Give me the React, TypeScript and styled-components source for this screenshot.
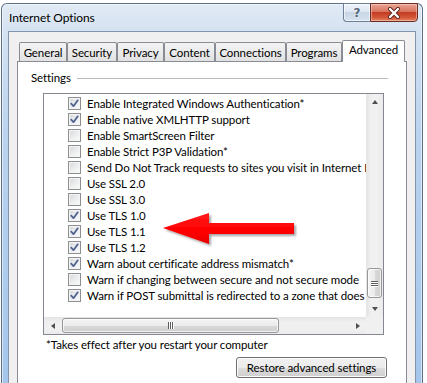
import styled, { createGlobalStyle } from "styled-components";

const GlobalStyle = createGlobalStyle`
  html, body {
    margin: 0;
    padding: 0;
    background: #ffffff;
    overflow: hidden;
  }
  body {
    font-family: Lato, "Open Sans", sans-serif;
    font-size: 11.5px;
    letter-spacing: -0.1px;
    color: #000000;
  }
`;

interface Setting {
  label: string;
  checked: boolean;
}

const settings: Setting[] = [
  { label: "Enable Integrated Windows Authentication*", checked: true },
  { label: "Enable native XMLHTTP support", checked: true },
  { label: "Enable SmartScreen Filter", checked: false },
  { label: "Enable Strict P3P Validation*", checked: false },
  { label: "Send Do Not Track requests to sites you visit in Internet Explorer*", checked: false },
  { label: "Use SSL 2.0", checked: false },
  { label: "Use SSL 3.0", checked: false },
  { label: "Use TLS 1.0", checked: true },
  { label: "Use TLS 1.1", checked: true },
  { label: "Use TLS 1.2", checked: true },
  { label: "Warn about certificate address mismatch*", checked: true },
  { label: "Warn if changing between secure and not secure mode", checked: false },
  { label: "Warn if POST submittal is redirected to a zone that does not permit posts", checked: true },
];

const tabs = [
  { label: "General", width: 48 },
  { label: "Security", width: 50 },
  { label: "Privacy", width: 47 },
  { label: "Content", width: 51 },
  { label: "Connections", width: 71 },
  { label: "Programs", width: 56 },
  { label: "Advanced", width: 63, active: true },
];

const Page = styled.div`
  position: relative;
  width: 427px;
  height: 383px;
  overflow: hidden;
`;

const Window = styled.div`
  margin: 3px 0 0 1px;
  width: 422px;
  height: 400px;
  box-sizing: border-box;
  border: 1px solid #5b6f88;
  border-bottom: none;
  border-radius: 6px 6px 0 0;
  background: linear-gradient(180deg, #e1eaf5 0, #d4e2f1 28px, #bad3ee 130px, #a3c5eb 100%);
  box-shadow: inset 0 0 0 1px rgba(255, 255, 255, 0.55);
  display: flex;
  flex-direction: column;
`;

const TitleBar = styled.div`
  height: 27px;
  flex-shrink: 0;
  display: flex;
  align-items: flex-start;
`;

const Title = styled.div`
  padding: 6px 0 0 7px;
  line-height: 16px;
  font-size: 12px;
  color: #000;
`;

const CaptionButtons = styled.div`
  margin: -1px 4px 0 auto;
  display: flex;
`;

const HelpButton = styled.div`
  width: 27px;
  height: 19px;
  box-sizing: border-box;
  border: 1px solid #6e7f95;
  border-right: none;
  border-radius: 0 0 0 4px;
  background: linear-gradient(180deg, #eef3f9 0, #dde7f2 45%, #c7d5e5 50%, #d6e2ef 100%);
  box-shadow: inset 0 0 0 1px rgba(255, 255, 255, 0.6);
  display: flex;
  align-items: center;
  justify-content: center;
  font-family: "DejaVu Sans", sans-serif;
  font-weight: bold;
  font-size: 12px;
  color: #56677c;
  text-shadow: 0 0 2px #ffffff;
`;

const CloseButton = styled.div`
  width: 48px;
  height: 19px;
  box-sizing: border-box;
  border: 1px solid #6a2e26;
  border-radius: 0 0 4px 0;
  background: linear-gradient(180deg, #e8a595 0, #d8745f 45%, #c43c22 50%, #d4583c 80%, #e58a62 100%);
  box-shadow: inset 0 0 0 1px rgba(255, 220, 210, 0.45);
  display: flex;
  align-items: center;
  justify-content: center;
`;

const Client = styled.div`
  flex: 1;
  margin: 0 6px;
  border: 1px solid #8295ad;
  border-bottom: none;
  background: #f0f0f0;
  padding: 8px 8px 0;
  display: flex;
  flex-direction: column;
`;

const TabRow = styled.div`
  height: 21px;
  padding-left: 2px;
  display: flex;
  align-items: flex-end;
  position: relative;
  z-index: 1;
`;

const Tab = styled.div<{ $w: number; $active?: boolean }>`
  width: ${({ $w }) => $w}px;
  height: ${({ $active }) => ($active ? 22 : 19)}px;
  margin-bottom: ${({ $active }) => ($active ? -1 : 0)}px;
  box-sizing: border-box;
  border: 1px solid #898c95;
  border-bottom: none;
  border-radius: 2px 2px 0 0;
  background: ${({ $active }) =>
    $active ? "#ffffff" : "linear-gradient(180deg, #f3f3f3 0, #ebebeb 50%, #e1e1e1 100%)"};
  display: flex;
  justify-content: center;
  padding-top: ${({ $active }) => ($active ? 1 : 2)}px;
  line-height: 15px;
  white-space: nowrap;
`;

const Panel = styled.div`
  flex: 1;
  border: 1px solid #898c95;
  border-bottom: none;
  background: #ffffff;
  display: flex;
  flex-direction: column;
`;

const GroupHeader = styled.div`
  display: flex;
  align-items: center;
  padding: 8px 18px 0 13px;
  line-height: 16px;
`;

const GroupLine = styled.div`
  flex: 1;
  height: 1px;
  margin: 1px 0 0 6px;
  background: #b9bdc2;
`;

const ListBox = styled.div`
  margin: 7px 0 0 25px;
  width: 341px;
  height: 242px;
  box-sizing: border-box;
  border: 1px solid #828790;
  display: grid;
  grid-template-columns: 1fr 17px;
  grid-template-rows: 1fr 17px;
`;

const Rows = styled.div`
  overflow: hidden;
  padding: 1px 0 0 24px;
`;

const Row = styled.div`
  height: 16px;
  display: flex;
  align-items: center;
  gap: 6px;
  white-space: nowrap;
`;

const CheckBox = styled.div`
  width: 13px;
  height: 13px;
  flex-shrink: 0;
  box-sizing: border-box;
  border: 1px solid #8e8f8f;
  background: linear-gradient(135deg, #d5d8dc 0, #eceef0 55%, #fbfbfb 100%);
  box-shadow: inset 0 0 0 1px #f4f4f4;
  display: flex;
  align-items: center;
  justify-content: center;
`;

const VScroll = styled.div`
  display: flex;
  flex-direction: column;
  background: linear-gradient(90deg, #e4e4e4 0, #f0f0f0 30%, #f0f0f0 70%, #ebebeb 100%);
`;

const HScroll = styled.div`
  display: flex;
  background: linear-gradient(180deg, #e4e4e4 0, #f0f0f0 30%, #f0f0f0 70%, #ebebeb 100%);
`;

const Corner = styled.div`
  background: #f0f0f0;
`;

const ArrowCell = styled.div`
  width: 17px;
  height: 17px;
  flex-shrink: 0;
  display: flex;
  align-items: center;
  justify-content: center;
`;

const Arrow = styled.div<{ $dir: "up" | "down" | "left" | "right" }>`
  width: 0;
  height: 0;
  border: 3px solid transparent;
  ${({ $dir }) =>
    $dir === "up"
      ? "border-bottom: 4px solid #505050; border-top-width: 0; margin-top: -1px;"
      : $dir === "down"
      ? "border-top: 4px solid #505050; border-bottom-width: 0;"
      : $dir === "left"
      ? "border-right: 4px solid #505050; border-left-width: 0;"
      : "border-left: 4px solid #505050; border-right-width: 0;"}
`;

const Track = styled.div<{ $vertical?: boolean }>`
  flex: 1;
  display: flex;
  flex-direction: ${({ $vertical }) => ($vertical ? "column" : "row")};
`;

const Thumb = styled.div<{ $vertical?: boolean; $offset: number; $size: number }>`
  box-sizing: border-box;
  border: 1px solid #979797;
  border-radius: 3px;
  display: flex;
  align-items: center;
  justify-content: center;
  ${({ $vertical, $offset, $size }) =>
    $vertical
      ? `margin: ${$offset}px 0 0 1px; width: 15px; height: ${$size}px;
         background: linear-gradient(90deg, #f4f4f4 0, #ebebeb 50%, #d9d9d9 51%, #cfcfcf 100%);`
      : `margin: 1px 0 0 ${$offset}px; height: 15px; width: ${$size}px;
         background: linear-gradient(180deg, #f4f4f4 0, #ebebeb 50%, #d9d9d9 51%, #cfcfcf 100%);`}
  box-shadow: inset 0 0 0 1px rgba(255, 255, 255, 0.7);
`;

const Grip = styled.div<{ $vertical?: boolean }>`
  display: flex;
  flex-direction: ${({ $vertical }) => ($vertical ? "column" : "row")};
  gap: 1px;
`;

const GripLine = styled.div<{ $vertical?: boolean }>`
  background: #5c5c5c;
  box-shadow: ${({ $vertical }) => ($vertical ? "0 1px 0 #ffffff" : "1px 0 0 #ffffff")};
  ${({ $vertical }) => ($vertical ? "width: 7px; height: 1px;" : "width: 1px; height: 7px;")}
`;

const Footnote = styled.div`
  margin: 2px 0 0 28px;
  line-height: 16px;
`;

const RestoreButton = styled.div`
  align-self: flex-end;
  margin: 4px 19px 0 0;
  width: 151px;
  height: 21px;
  box-sizing: border-box;
  border: 1px solid #707070;
  border-radius: 3px;
  background: linear-gradient(180deg, #f2f2f2 0, #ebebeb 50%, #dddddd 51%, #cfcfcf 100%);
  box-shadow: inset 0 0 0 1px #fcfcfc;
  display: flex;
  align-items: center;
  justify-content: center;
  white-space: nowrap;
`;

const Callout = styled.svg`
  position: absolute;
  left: 158px;
  top: 208px;
  overflow: visible;
`;

function Check() {
  return (
    <svg width="9" height="9" viewBox="0 0 9 9">
      <path d="M1.2 4.6 L3.5 7.2 L7.8 1.3" fill="none" stroke="#4b5d8e" strokeWidth="1.7" strokeLinecap="round" strokeLinejoin="round" />
    </svg>
  );
}

function Grips({ vertical }: { vertical?: boolean }) {
  return (
    <Grip $vertical={vertical}>
      {[0, 1, 2].map(i => (
        <GripLine key={i} $vertical={vertical} />
      ))}
    </Grip>
  );
}

export default function App() {
  return (
    <Page>
      <GlobalStyle />
      <Window>
        <TitleBar>
          <Title>Internet Options</Title>
          <CaptionButtons>
            <HelpButton>?</HelpButton>
            <CloseButton>
              <svg width="14" height="12" viewBox="0 0 14 12">
                <path d="M3 2 L11 10 M11 2 L3 10" stroke="#5a2118" strokeWidth="4" strokeLinecap="round" />
                <path d="M3 2 L11 10 M11 2 L3 10" stroke="#ffffff" strokeWidth="2.4" strokeLinecap="round" />
              </svg>
            </CloseButton>
          </CaptionButtons>
        </TitleBar>
        <Client>
          <TabRow>
            {tabs.map(tab => (
              <Tab key={tab.label} $w={tab.width} $active={tab.active}>
                {tab.label}
              </Tab>
            ))}
          </TabRow>
          <Panel>
            <GroupHeader>
              Settings
              <GroupLine />
            </GroupHeader>
            <ListBox>
              <Rows>
                {settings.map(s => (
                  <Row key={s.label}>
                    <CheckBox>{s.checked && <Check />}</CheckBox>
                    {s.label}
                  </Row>
                ))}
              </Rows>
              <VScroll>
                <ArrowCell>
                  <Arrow $dir="up" />
                </ArrowCell>
                <Track $vertical>
                  <Thumb $vertical $offset={157} $size={30}>
                    <Grips vertical />
                  </Thumb>
                </Track>
                <ArrowCell>
                  <Arrow $dir="down" />
                </ArrowCell>
              </VScroll>
              <HScroll>
                <ArrowCell>
                  <Arrow $dir="left" />
                </ArrowCell>
                <Track>
                  <Thumb $offset={1} $size={217}>
                    <Grips />
                  </Thumb>
                </Track>
                <ArrowCell>
                  <Arrow $dir="right" />
                </ArrowCell>
              </HScroll>
              <Corner />
            </ListBox>
            <Footnote>*Takes effect after you restart your computer</Footnote>
            <RestoreButton>Restore advanced settings</RestoreButton>
          </Panel>
        </Client>
      </Window>
      <Callout width="140" height="42" viewBox="0 0 140 42">
        <defs>
          <filter id="shadow" x="-10%" y="-20%" width="130%" height="160%">
            <feDropShadow dx="2" dy="2" stdDeviation="1.3" floodColor="#000" floodOpacity="0.35" />
          </filter>
          <linearGradient id="red" x1="0" y1="0" x2="0" y2="1">
            <stop offset="0" stopColor="#ff1a1a" />
            <stop offset="0.6" stopColor="#ff0000" />
            <stop offset="1" stopColor="#e60000" />
          </linearGradient>
        </defs>
        <polygon
          points="5,20 51,5 51,15 136,15 136,26 51,26 51,36"
          fill="url(#red)"
          filter="url(#shadow)"
        />
      </Callout>
    </Page>
  );
}
